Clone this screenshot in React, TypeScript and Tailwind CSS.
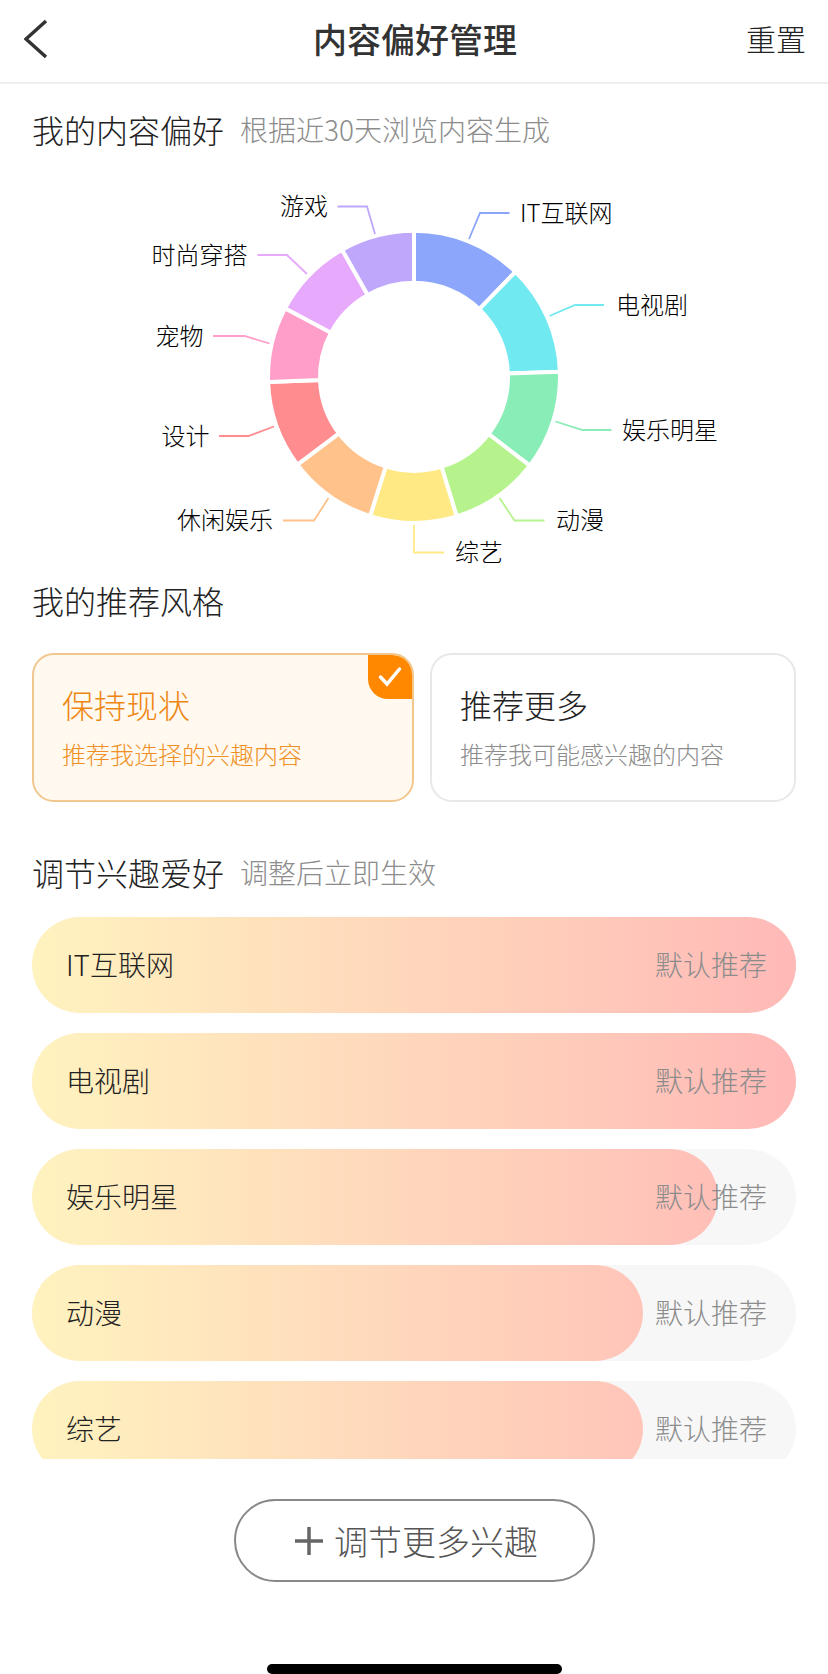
const segments = [
  { name: 'IT互联网', color: '#8CA6FB', end: 44, line: '469,239 480,213 509.5,213', x: 520, y: 213 },
  { name: '电视剧', color: '#70E9F0', end: 88, line: '549.5,316 575,305 604,305', x: 616, y: 305 },
  { name: '娱乐明星', color: '#88EDB6', end: 127.5, line: '555.5,421.5 582.5,430 611.5,430', x: 622, y: 430 },
  { name: '动漫', color: '#B7F38C', end: 163, line: '499.5,498 514.5,520.5 544.5,520.5', x: 556, y: 520.5 },
  { name: '综艺', color: '#FFE984', end: 197.5, line: '414,525 414,552.5 444,552.5', x: 455, y: 552.5 },
  { name: '休闲娱乐', color: '#FFC28A', end: 233, line: '328.5,498 314,520.5 283,520.5', x: 177, y: 520.5 },
  { name: '设计', color: '#FF8C8F', end: 268, line: '274,426.5 248.5,436 219,436', x: 161.5, y: 436 },
  { name: '宠物', color: '#FF9EC9', end: 298, line: '269.5,343.5 244.5,336 213,336', x: 155.5, y: 336 },
  { name: '时尚穿搭', color: '#E7A9FC', end: 330.5, line: '307,274 287,255 257.5,255', x: 151.5, y: 255 },
  { name: '游戏', color: '#BFA7FC', end: 360, line: '375,234 367,206.5 337.5,206.5', x: 280, y: 206.5 },
];

const interests = [
  { name: 'IT互联网', width: '100%' },
  { name: '电视剧', width: '100%' },
  { name: '娱乐明星', width: '89.8%' },
  { name: '动漫', width: '80%' },
  { name: '综艺', width: '80%' },
];

function point(radius: number, angle: number) {
  const rad = (angle * Math.PI) / 180;
  return `${414 + radius * Math.sin(rad)} ${376.8 + -radius * Math.cos(rad)}`;
}

function sector(start: number, end: number) {
  const outer = 146;
  const inner = 94;
  return `M${point(outer, start)} A${outer} ${outer} 0 0 1 ${point(outer, end)} L${point(inner, end)} A${inner} ${inner} 0 0 0 ${point(inner, start)} Z`;
}

function Donut() {
  return (
    <svg className="block h-[400px] w-full" viewBox="0 170 828 400">
      {segments.map((s, i) => (
        <g key={s.name}>
          <path d={sector(i === 0 ? 0 : segments[i - 1].end, s.end)} fill={s.color} stroke="#fff" strokeWidth="4" />
          <polyline points={s.line} fill="none" stroke={s.color} strokeWidth="1.8" />
          <text x={s.x} y={s.y} dy="0.36em" fontSize="24" fontWeight="300" fill="#000">
            {s.name}
          </text>
        </g>
      ))}
    </svg>
  );
}

function SectionTitle({ title, note }: { title: string; note?: string }) {
  return (
    <div className="flex items-center px-8 leading-[44px]">
      <span className="text-[32px] text-[#222]">{title}</span>
      {note && <span className="ml-4 text-[28px] text-[#8c8c8c]">{note}</span>}
    </div>
  );
}

export default function App() {
  return (
    <div className="flex h-[1674px] w-[828px] flex-col overflow-hidden bg-white font-['Noto_Sans_CJK_SC','Liberation_Sans',sans-serif] font-light">
      <header className="grid h-[84px] shrink-0 grid-cols-[1fr_auto_1fr] items-center border-b-2 border-[#eeeeee] pb-1 pl-6 pr-[22px]">
        <svg width="24" height="40" viewBox="0 0 24 40" fill="none" stroke="#333" strokeWidth="3.5">
          <polyline points="22,2 2,20 22,38" />
        </svg>
        <h1 className="mb-[2px] text-[34px] font-medium text-[#333]">内容偏好管理</h1>
        <button className="mb-[2px] justify-self-end text-[30px] font-light text-[#222]">重置</button>
      </header>

      <div className="h-[23px] shrink-0" />
      <SectionTitle title="我的内容偏好" note="根据近30天浏览内容生成" />
      <div className="h-[19px] shrink-0" />
      <Donut />

      <div className="h-[8px] shrink-0" />
      <SectionTitle title="我的推荐风格" />

      <div className="mt-[31px] flex shrink-0 gap-4 px-8">
        <div className="relative h-[149px] w-[382px] overflow-hidden rounded-[22px] border-2 border-[#F2C78E] bg-[#FFF9F0] pl-[28px] pt-[26px]">
          <div className="text-[32px] leading-[46px] text-[#EE8612]">保持现状</div>
          <div className="mt-[10px] text-[24px] leading-[34px] text-[#F09024]">推荐我选择的兴趣内容</div>
          <div className="absolute right-0 top-0 h-[44px] w-[44px] rounded-bl-[20px] bg-[#FF8800]">
            <svg width="44" height="44" viewBox="0 0 44 44" fill="none" stroke="#fff" strokeWidth="3.5" strokeLinecap="round">
              <polyline points="12.5,22 19,29 31.5,14" />
            </svg>
          </div>
        </div>
        <div className="h-[149px] w-[366px] rounded-[22px] border-2 border-[#E8E8E8] pl-[28px] pt-[26px]">
          <div className="text-[32px] leading-[46px] text-[#222]">推荐更多</div>
          <div className="mt-[10px] text-[24px] leading-[34px] text-[#8c8c8c]">推荐我可能感兴趣的内容</div>
        </div>
      </div>

      <div className="h-[48px] shrink-0" />
      <SectionTitle title="调节兴趣爱好" note="调整后立即生效" />

      <div className="mt-[23px] flex h-[542px] shrink-0 flex-col gap-5 overflow-hidden px-8">
        {interests.map((item) => (
          <div key={item.name} className="grid h-[96px] shrink-0 grid-cols-1 grid-rows-1 rounded-full bg-[#F7F7F7]">
            <div
              className="col-start-1 row-start-1 rounded-full bg-linear-to-r from-[#FFF3BF] to-[#FFB9B7] bg-[length:764px_100%] bg-no-repeat"
              style={{ width: item.width }}
            />
            <div className="col-start-1 row-start-1 flex items-center justify-between pb-[2px] pl-[34px] pr-[29px] text-[28px]">
              <span className="text-[#222]">{item.name}</span>
              <span className="text-[#8c8c8c]">默认推荐</span>
            </div>
          </div>
        ))}
      </div>

      <div className="mt-[40px] flex shrink-0 justify-center">
        <button className="flex h-[83px] w-[361px] items-center justify-center gap-[10px] rounded-full border-2 border-[#888] pl-1 text-[34px] text-[#555]">
          <svg width="30" height="30" viewBox="0 0 30 30" fill="none" stroke="#666" strokeWidth="3.5">
            <path d="M15 1V29M1 15H29" />
          </svg>
          调节更多兴趣
        </button>
      </div>

      <div className="mt-auto flex shrink-0 justify-center">
        <div className="h-[10px] w-[295px] rounded-full bg-black" />
      </div>
    </div>
  );
}
